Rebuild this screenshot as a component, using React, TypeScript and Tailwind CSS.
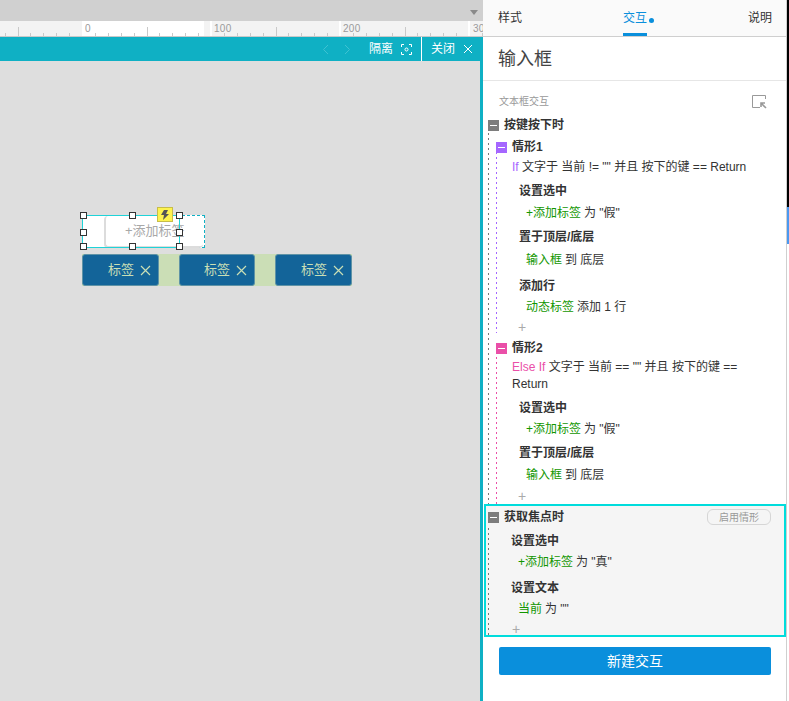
import type { ReactNode } from 'react';

const F = '"Liberation Sans","Noto Sans CJK SC",sans-serif';

function Minus({ c }: { c: string }) {
  return (
    <span className={`flex h-[11px] w-[11px] shrink-0 items-center justify-center ${c}`}>
      <span className="h-px w-[7px] bg-white" />
    </span>
  );
}

function Ruler() {
  const ticks: { x: number; major: boolean }[] = [];
  for (let i = -6; i < 32; i++) {
    ticks.push({ x: Math.round(82 + i * 12.9), major: ((i % 5) + 5) % 5 === 0 });
  }
  return (
    <div className="relative h-[16px] shrink-0 overflow-hidden border-b border-[#c9c9c9] bg-[#f3f3f3]">
      <div className="absolute bottom-0 left-[83px] top-0 w-[121px] bg-white" />
      {[82, 210, 339, 468].map((x) => (
        <span key={x} className="absolute top-0 h-full w-[2px] bg-white" style={{ left: x }} />
      ))}
      {ticks.map((t) =>
        [82, 211, 340, 469].includes(t.x) ? null : (
          <span
            key={t.x}
            className={`absolute bottom-0 w-px bg-[#c9c9c9] ${t.major ? 'h-[9px]' : 'h-[3px]'}`}
            style={{ left: t.x }}
          />
        ),
      )}
      {(
        [
          ['0', 85],
          ['100', 214],
          ['200', 343],
          ['30', 473],
        ] as [string, number][]
      ).map(([t, x]) => (
        <span key={t} className="absolute top-[2px] text-[10px] leading-[12px] tracking-[0.3px] text-[#9a9a9a]" style={{ left: x }}>
          {t}
        </span>
      ))}
    </div>
  );
}

function Handle({ x, y }: { x: number; y: number }) {
  return <span className="absolute h-[7px] w-[7px] border-[1.5px] border-[#333] bg-white" style={{ left: x, top: y }} />;
}

function Tag({ w }: { w: string }) {
  return (
    <div className={`flex h-[32px] ${w} items-center justify-end gap-[6px] rounded-[3px] border border-[#5f93a6] bg-[#136499] pr-[7px] text-[13px] text-[#c9dfb5]`}>
      <span>标签</span>
      <svg width="11" height="11" viewBox="0 0 11 11" stroke="#c9dfb5" strokeWidth="1.2">
        <path d="M1 1l9 9M10 1l-9 9" />
      </svg>
    </div>
  );
}

function Canvas() {
  return (
    <div className="flex h-full w-[483px] shrink-0 flex-col">
      <div className="relative h-[21px] shrink-0 bg-[#d0d0d0]">
        <span className="absolute right-[5px] top-[10px] h-0 w-0 border-x-[4px] border-t-[5px] border-x-transparent border-t-[#8a8a8a]" />
      </div>
      <Ruler />
      <div className="flex h-[24px] shrink-0 items-center justify-end bg-[#0fb0c4] text-[12px] text-white">
        <svg width="8" height="11" viewBox="0 0 8 11" fill="none" stroke="#3fc2d2" className="mr-[13px]">
          <path d="M6 1L1.5 5.5 6 10" />
        </svg>
        <svg width="8" height="11" viewBox="0 0 8 11" fill="none" stroke="#3fc2d2" className="mr-[18px]">
          <path d="M2 1l4.5 4.5L2 10" />
        </svg>
        <span>隔离</span>
        <svg width="11" height="11" viewBox="0 0 11 11" fill="none" stroke="white" className="ml-[8px] mr-[9px]">
          <path d="M.5 3V.5H3M8 .5h2.5V3M10.5 8v2.5H8M3 10.5H.5V8" />
          <circle cx="5.5" cy="5.5" r="1.5" />
        </svg>
        <span className="h-full w-px bg-white" />
        <span className="ml-[9px]">关闭</span>
        <svg width="10" height="10" viewBox="0 0 10 10" stroke="white" className="ml-[8px] mr-[10px]">
          <path d="M1 1l8 8M9 1L1 9" />
        </svg>
      </div>
      <div className="flex min-h-0 flex-1">
        <div className="relative flex-1 bg-[#dedede]">
          <div className="absolute left-[82px] top-[154px] h-[33px] w-[123px] border border-dashed border-[#0fb0c4] bg-white" />
          <div className="absolute left-[104px] top-[155px] flex h-[32px] w-[99px] items-center rounded-[4px] border-b-2 border-l-2 border-[#dcdcdc] bg-white pl-[19px] text-[13px] text-[#a8a8a8]">
            +添加标签
          </div>
          <div className="absolute left-[82px] top-[154px] h-[33px] w-[98px] border border-[#1fd3d8]" />
          <Handle x={80} y={151} />
          <Handle x={129} y={151} />
          <Handle x={176} y={151} />
          <Handle x={80} y={168} />
          <Handle x={176} y={168} />
          <Handle x={80} y={182} />
          <Handle x={129} y={182} />
          <Handle x={176} y={182} />
          <div className="absolute left-[157px] top-[146px] flex h-[15px] w-[16px] items-center justify-center border border-[#c7bd4a] bg-[#fdf34f]">
            <svg width="8" height="10" viewBox="0 0 8 10" fill="#555">
              <path d="M3 0h4L5 4h3L2 10l1-5H0z" />
            </svg>
          </div>
          <div className="absolute left-[82px] top-[193px] flex h-[32px] w-[270px] justify-between bg-[#cbdeb6]">
            <Tag w="w-[77px]" />
            <Tag w="w-[76px]" />
            <Tag w="w-[77px]" />
          </div>
        </div>
        <div className="w-[3px] bg-[#0fb0c4]" />
      </div>
    </div>
  );
}

function Row({ mt, pl, bold, children }: { mt: string; pl: string; bold?: boolean; children: ReactNode }) {
  return <div className={`flex h-[20px] items-center whitespace-pre ${mt} ${pl} ${bold ? 'font-bold' : ''}`}>{children}</div>;
}

function Line({ mt, pl, green, rest }: { mt: string; pl: string; green: string; rest: string }) {
  return (
    <Row mt={mt} pl={pl}>
      <span className="text-[#129600]">{green}</span>
      <span className="ml-[3px]">{rest}</span>
    </Row>
  );
}

function Plus({ mt, pl, h }: { mt: string; pl: string; h: string }) {
  return <div className={`${mt} ${pl} ${h} text-[14px] leading-[18px] text-[#aaa]`}>+</div>;
}

function Panel() {
  return (
    <div className="flex h-full min-w-0 flex-1 flex-col bg-white text-[#333]">
      <div className="flex h-[37px] shrink-0 items-center justify-between border-b border-[#cfcfcf] bg-[#fafafa] pl-[15px] pr-[14px] text-[12px]">
        <span>样式</span>
        <span className="relative flex h-full items-center text-[#0a8fdc]">
          交互
          <span className="absolute bottom-0 left-0 h-[3px] w-[24px] bg-[#0a8fdc]" />
          <span className="absolute left-[26px] top-[18px] h-[5px] w-[5px] rounded-full bg-[#0a8fdc]" />
        </span>
        <span>说明</span>
      </div>
      <div className="flex h-[44px] shrink-0 items-center border-b border-[#e6e6e6] pl-[15px] pt-[1px] text-[18px] text-[#444]">输入框</div>
      <div className="flex h-[34px] shrink-0 items-center justify-between pl-[16px] pr-[19px] pt-[7px] text-[10px] text-[#999]">
        <span>文本框交互</span>
        <svg width="15" height="14" viewBox="0 0 15 14" fill="none">
          <path d="M13.5 4V.5H.5v12H8" stroke="#999" />
          <path d="M14 13L9.5 8.5M9 12V8h4" stroke="#999" strokeWidth="1.6" />
        </svg>
      </div>
      <div className="relative min-h-0 flex-1 text-[12px]">
        <div className="absolute left-[5px] top-[18px] h-[371px] w-px bg-[repeating-linear-gradient(to_bottom,#777_0,#777_2px,transparent_2px,transparent_5px)]" />
        <div className="absolute left-[13px] top-[37px] h-[181px] w-px bg-[repeating-linear-gradient(to_bottom,#a566ff_0,#a566ff_2px,transparent_2px,transparent_5px)]" />
        <div className="absolute left-[13px] top-[237px] h-[152px] w-px bg-[repeating-linear-gradient(to_bottom,#ea4fa8_0,#ea4fa8_2px,transparent_2px,transparent_5px)]" />

        <Row mt="mt-0" pl="pl-[5px]" bold>
          <Minus c="mr-[5px] bg-[#7d7d7d]" />
          按键按下时
        </Row>
        <Row mt="mt-[2px]" pl="pl-[13px]" bold>
          <Minus c="mr-[5px] bg-[#a566ff]" />
          情形1
        </Row>
        <Row mt="mt-0" pl="pl-[29px]">
          <span className="text-[#a566ff]">If</span> 文字于 当前 != "" 并且 按下的键 == Return
        </Row>
        <Row mt="mt-[4px]" pl="pl-[36px]" bold>设置选中</Row>
        <Line mt="mt-[2px]" pl="pl-[43px]" green="+添加标签" rest={'为 "假"'} />
        <Row mt="mt-[4px]" pl="pl-[36px]" bold>置于顶层/底层</Row>
        <Line mt="mt-[3px]" pl="pl-[43px]" green="输入框" rest="到 底层" />
        <Row mt="mt-[6px]" pl="pl-[36px]" bold>添加行</Row>
        <Line mt="mt-[1px]" pl="pl-[43px]" green="动态标签" rest="添加 1 行" />
        <Plus mt="mt-[1px]" pl="pl-[35px]" h="h-[20px]" />

        <Row mt="mt-0" pl="pl-[13px]" bold>
          <Minus c="mr-[5px] bg-[#ea4fa8]" />
          情形2
        </Row>
        <div className="mt-[1px] pl-[29px] pr-[30px] leading-[17px]">
          <span className="text-[#ea4fa8]">Else If</span> 文字于 当前 == "" 并且 按下的键 == Return
        </div>
        <Row mt="mt-[5px]" pl="pl-[36px]" bold>设置选中</Row>
        <Line mt="mt-[1px]" pl="pl-[43px]" green="+添加标签" rest={'为 "假"'} />
        <Row mt="mt-[4px]" pl="pl-[36px]" bold>置于顶层/底层</Row>
        <Line mt="mt-[2px]" pl="pl-[43px]" green="输入框" rest="到 底层" />
        <Plus mt="mt-[2px]" pl="pl-[35px]" h="h-[17px]" />

        <div className="relative ml-px h-[133px] border-2 border-[#00dcdc] bg-[#f5f5f5]">
          <div className="absolute left-[2px] top-[22px] h-[107px] w-px bg-[repeating-linear-gradient(to_bottom,#777_0,#777_2px,transparent_2px,transparent_5px)]" />
          <div className="absolute left-[221px] top-[3px] flex h-[16px] w-[64px] items-center justify-center rounded-[6px] border border-[#d6d6d6] text-[10px] text-[#999]">
            启用情形
          </div>
          <Row mt="mt-[1px]" pl="pl-[2px]" bold>
            <Minus c="mr-[5px] bg-[#7d7d7d]" />
            获取焦点时
          </Row>
          <Row mt="mt-[4px]" pl="pl-[25px]" bold>设置选中</Row>
          <Line mt="mt-[1px]" pl="pl-[32px]" green="+添加标签" rest={'为 "真"'} />
          <Row mt="mt-[6px]" pl="pl-[25px]" bold>设置文本</Row>
          <Line mt="mt-[1px]" pl="pl-[32px]" green="当前" rest={'为 ""'} />
          <Plus mt="mt-[1px]" pl="pl-[26px]" h="h-[15px]" />
        </div>
        <div className="ml-[16px] mr-[15px] mt-[10px] flex h-[28px] items-center justify-center rounded-[2px] bg-[#0a8fdc] text-[14px] text-white">新建交互</div>
      </div>
    </div>
  );
}

export default function App() {
  return (
    <div className="flex h-[701px] w-[789px] overflow-hidden bg-white" style={{ fontFamily: F }}>
      <Canvas />
      <Panel />
      <div className="w-px shrink-0 bg-[#cfcfcf]" />
      <div className="flex w-[2px] shrink-0 flex-col bg-white">
        <div className="h-[207px] bg-black" />
        <div className="h-[37px] bg-[#4a98f0]" />
      </div>
    </div>
  );
}
